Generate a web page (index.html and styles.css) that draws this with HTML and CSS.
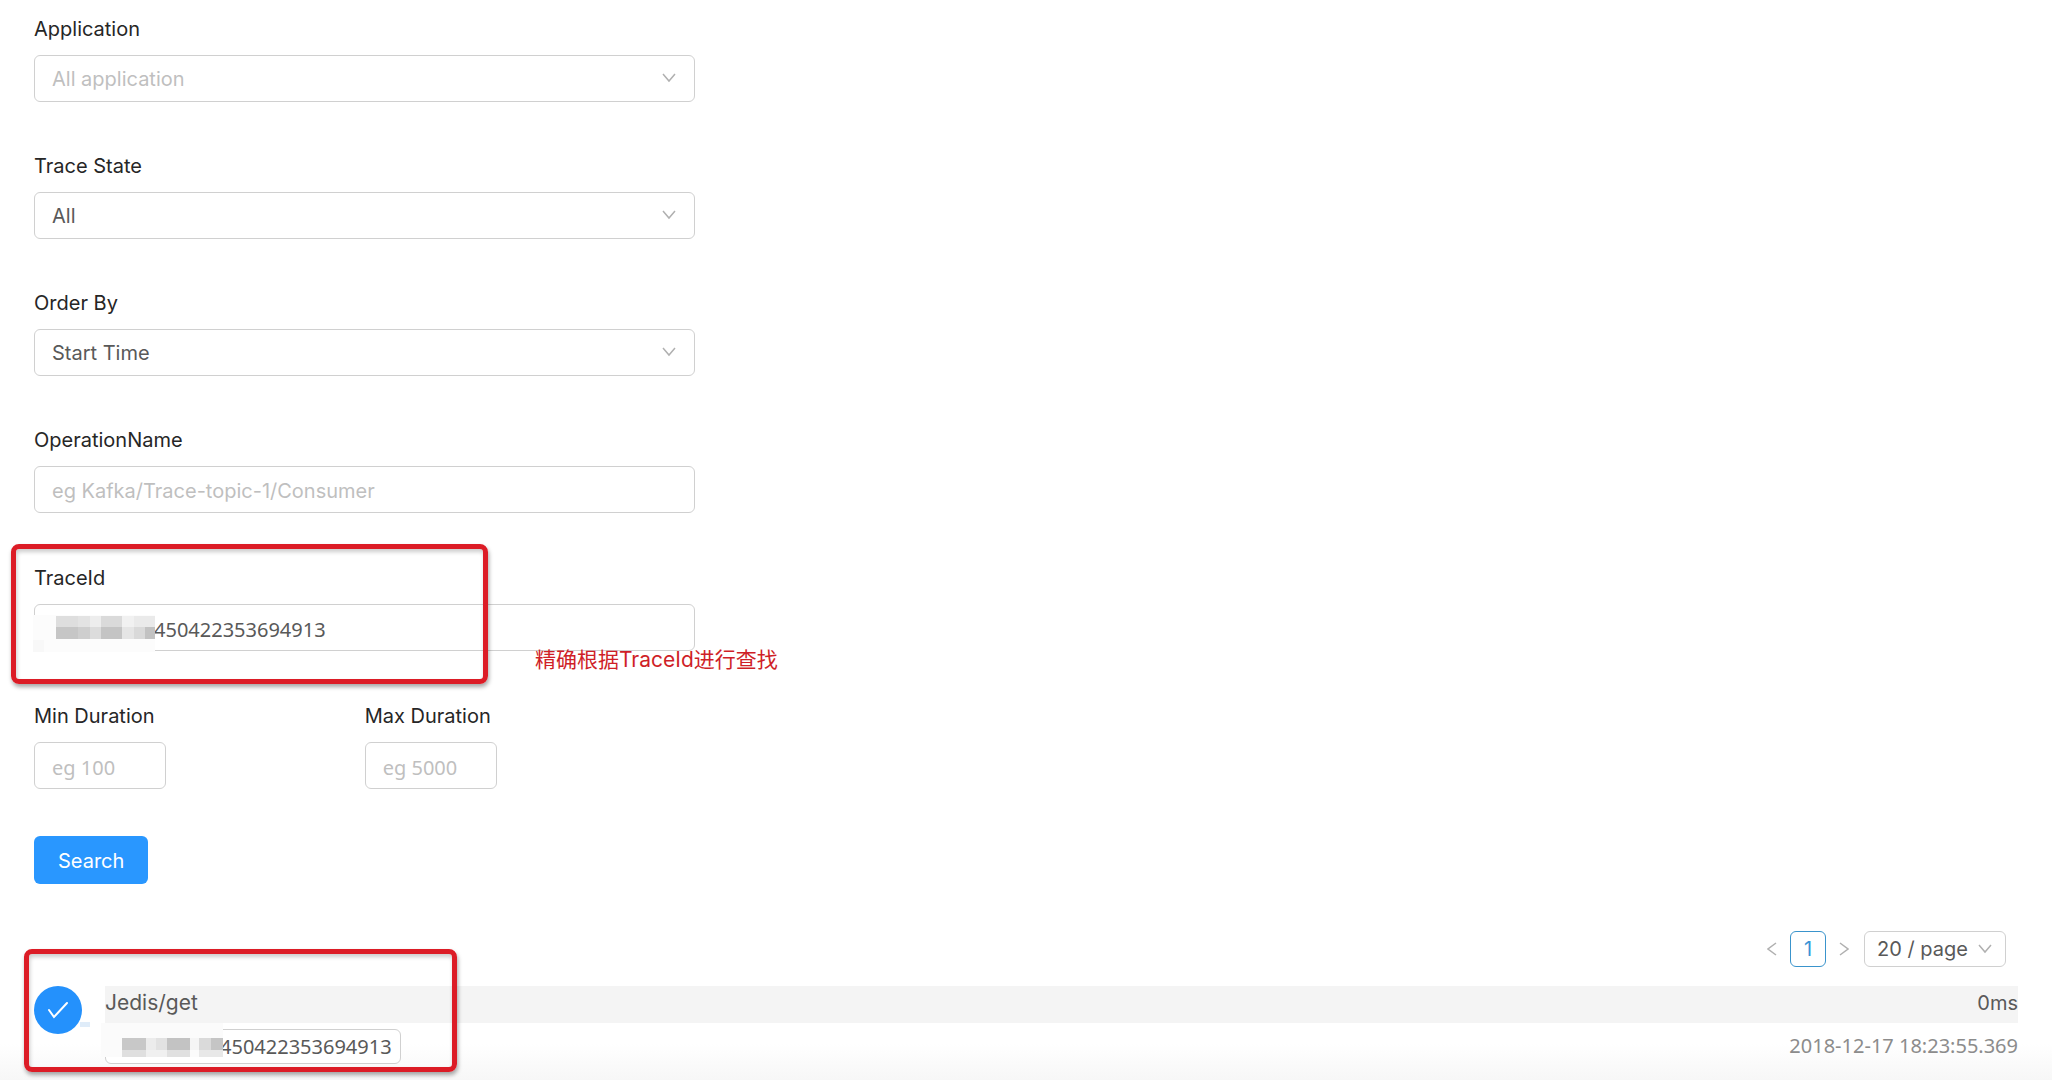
FILE: index.html
```html
<!DOCTYPE html>
<html lang="en">
<head>
<meta charset="utf-8">
<title>Trace search</title>
<link rel="stylesheet" href="styles.css">
</head>
<body>
<main class="page">
  <form class="search">
    <div class="field">
      <label for="app">Application</label>
      <div class="control">
        <select id="app" class="box muted"><option>All application</option></select>
        <svg class="chevron" viewBox="0 0 14 10" aria-hidden="true"><path d="M1 1l6 7 6-7"/></svg>
      </div>
    </div>
    <div class="field">
      <label for="state">Trace State</label>
      <div class="control">
        <select id="state" class="box"><option>All</option></select>
        <svg class="chevron" viewBox="0 0 14 10" aria-hidden="true"><path d="M1 1l6 7 6-7"/></svg>
      </div>
    </div>
    <div class="field">
      <label for="order">Order By</label>
      <div class="control">
        <select id="order" class="box"><option>Start Time</option></select>
        <svg class="chevron" viewBox="0 0 14 10" aria-hidden="true"><path d="M1 1l6 7 6-7"/></svg>
      </div>
    </div>
    <div class="field text-field">
      <label for="operation">OperationName</label>
      <input id="operation" class="box text-box" type="text" placeholder="eg Kafka/Trace-topic-1/Consumer">
    </div>
    <div class="field text-field">
      <label for="trace">TraceId</label>
      <div class="control">
        <input id="trace" class="box text-box trace-input" type="text" value="450422353694913">
        <svg class="mask mask-input" viewBox="0 0 122 37" shape-rendering="crispEdges" aria-hidden="true">
          <path fill="#fcfcfc" d="M0 0h122v37H0z"/><path fill="#f8f8f8" d="M0 25h11v12H0z"/>
          <path fill="#dedede" d="M23 1h22v11H23z"/><path fill="#e3e3e3" d="M45 1h12v11H45z"/><path fill="#ededed" d="M57 1h11v11H57z"/><path fill="#dadada" d="M68 1h21v11H68z"/><path fill="#f1f1f1" d="M89 1h12v11H89z"/><path fill="#eaeaea" d="M101 1h21v11h-21z"/>
          <path fill="#c6c6c6" d="M23 12h22v12H23z"/><path fill="#cecece" d="M45 12h12v12H45z"/><path fill="#dcdcdc" d="M57 12h11v12H57z"/><path fill="#c4c4c4" d="M68 12h21v12H68z"/><path fill="#e5e5e5" d="M89 12h12v12H89z"/><path fill="#d9d9d9" d="M101 12h11v12h-11z"/><path fill="#c2c2c2" d="M112 12h10v12h-10z"/>
        </svg>
      </div>
      <div class="frame frame-trace"></div>
      <p class="note" lang="zh">精确根据TraceId进行查找</p>
    </div>
    <div class="durations">
      <div class="field text-field">
        <label for="min">Min Duration</label>
        <input id="min" class="box text-box short" type="text" placeholder="eg 100">
      </div>
      <div class="field text-field">
        <label for="max">Max Duration</label>
        <input id="max" class="box text-box short" type="text" placeholder="eg 5000">
      </div>
    </div>
    <button class="submit" type="button">Search</button>
  </form>

  <nav class="pager" aria-label="Pages">
    <button class="arrow" type="button" aria-label="Previous page"><svg viewBox="0 0 10 14"><path d="M9 1L1 7l8 6"/></svg></button>
    <button class="current" type="button">1</button>
    <button class="arrow" type="button" aria-label="Next page"><svg viewBox="0 0 10 14"><path d="M1 1l8 6-8 6"/></svg></button>
    <div class="control size">
      <select class="size-select" aria-label="Page size"><option>20 / page</option></select>
      <svg class="chevron" viewBox="0 0 14 10" aria-hidden="true"><path d="M1 1l6 7 6-7"/></svg>
    </div>
  </nav>

  <section class="result">
    <div class="status"><svg viewBox="0 0 22 18" aria-hidden="true"><path d="M2 9l5 7L20 2"/></svg></div>
    <div class="details">
      <div class="summary"><span class="operation">Jedis/get</span><span>0ms</span></div>
      <div class="meta">
        <span class="tag">450422353694913</span>
        <time class="date">2018-12-17 18:23:55.369</time>
      </div>
      <svg class="mask mask-tag" viewBox="0 0 146 36" shape-rendering="crispEdges" aria-hidden="true">
        <path fill="#dfecf9" d="M3 0h10v5H3z"/>
        <g transform="translate(24 0)">
          <path fill="#fbfbfb" d="M0 1h122v34H0z"/>
          <path fill="#c8c8c8" d="M21 16h24v12H21z"/><path fill="#ececec" d="M45 16h10v12H45z"/><path fill="#e2e2e2" d="M55 16h11v12H55z"/><path fill="#c3c3c3" d="M66 16h23v12H66z"/><path fill="#f5f5f5" d="M89 16h9v12H89z"/><path fill="#dadada" d="M98 16h12v12H98z"/><path fill="#c5c5c5" d="M110 16h12v12h-12z"/>
          <path fill="#dfdfdf" d="M21 28h24v7H21z"/><path fill="#f0f0f0" d="M45 28h21v7H45z"/><path fill="#e0e0e0" d="M66 28h23v7H66z"/><path fill="#e8e8e8" d="M98 28h24v7H98z"/>
        </g>
      </svg>
    </div>
    <div class="frame frame-result"></div>
  </section>
</main>
</body>
</html>
```
FILE: styles.css
```css
* { box-sizing: border-box; }

body {
  margin: 0;
  min-height: 100vh;
  background: linear-gradient(to top, #f7f7f7, #fff 36px);
  color: #595959;
  font: 20px/40px Inter, "Noto Sans", sans-serif;
}

.page { padding: 8px 34px 8px; }

.search { width: calc(100% / 3); }

.field { position: relative; margin-bottom: 43px; }

.text-field { margin-bottom: 44px; }

label { display: block; margin-bottom: 5px; color: #262626; line-height: 42px; }

.control { position: relative; }

.box,
.size-select {
  display: block;
  width: 100%;
  height: 47px;
  padding: 0 17px;
  border: 1px solid #d0d0d0;
  border-radius: 6px;
  background: #fff;
  color: #595959;
  font: inherit;
  line-height: 34px;
  appearance: none;
}

.text-box { padding-top: 3px; }

.box.muted,
.box::placeholder { color: #bfbfbf; opacity: 1; }

.chevron {
  position: absolute;
  top: 18px;
  right: 19px;
  width: 14px;
  height: 10px;
  pointer-events: none;
}

.chevron path,
.arrow path { fill: none; stroke: #b0b0b0; stroke-width: 1.5; }

.trace-input { padding-left: 119px; font-family: "Noto Sans", sans-serif; }

.mask { position: absolute; }
.mask-input { top: 11px; left: -1px; width: 122px; height: 37px; }
.mask-tag { top: 36px; left: -28px; width: 146px; height: 36px; }

.frame {
  position: absolute;
  border: 5px solid #dc1c26;
  border-radius: 8px;
  box-shadow: 1px 3px 4px rgba(0, 0, 0, .35), inset 1px 3px 4px rgba(0, 0, 0, .2);
  pointer-events: none;
}

.frame-trace { top: -13px; left: -23px; width: 477px; height: 140px; }
.frame-result { top: -37px; left: -10px; width: 433px; height: 123px; }

.note {
  position: absolute;
  top: 83px;
  left: 501px;
  margin: 0;
  color: #cf1f28;
  font-family: Inter, "Noto Sans CJK SC", sans-serif;
  font-size: 21px;
  white-space: nowrap;
}

.durations { display: grid; grid-template-columns: 1fr 1fr; }

.short { width: 40%; font-family: "Noto Sans", sans-serif; }

.submit {
  display: block;
  height: 48px;
  margin-top: 3px;
  padding: 2px 24px 0;
  border: 0;
  border-radius: 6px;
  background: #2997ff;
  color: #fff;
  font: inherit;
}

.pager {
  display: flex;
  align-items: center;
  justify-content: flex-end;
  margin: 47px 12px 19px 0;
}

.arrow {
  display: flex;
  padding: 0 13px;
  border: 0;
  background: none;
}

.arrow svg { width: 10px; height: 14px; }

.current {
  width: 36px;
  height: 36px;
  padding: 0;
  border: 1px solid #3a94cc;
  border-radius: 6px;
  background: #fff;
  color: #3a94d6;
  font: inherit;
  line-height: 34px;
}

.size { width: 142px; margin-left: 2px; }
.size-select { height: 36px; padding: 0 12px; }
.size .chevron { top: 13px; right: 14px; }

.result { position: relative; display: flex; gap: 23px; }

.status {
  display: flex;
  align-items: center;
  justify-content: center;
  width: 48px;
  height: 48px;
  border-radius: 50%;
  background: #2491fc;
}

.status svg { width: 22px; height: 18px; }
.status path { fill: none; stroke: #fff; stroke-width: 2; stroke-linecap: round; }

.details { position: relative; flex: 1; }

.summary {
  display: flex;
  justify-content: space-between;
  height: 37px;
  background: #f4f4f4;
  line-height: 34px;
}

.operation { font-size: 21px; }

.meta {
  display: flex;
  justify-content: space-between;
  margin-top: 6px;
  font-family: "Noto Sans", sans-serif;
  line-height: 34px;
}

.tag {
  height: 35px;
  padding: 0 8px 0 114px;
  border: 1px solid #d0d0d0;
  border-radius: 6px;
  background: #fff;
}

.date { color: #8c8c8c; }
```
